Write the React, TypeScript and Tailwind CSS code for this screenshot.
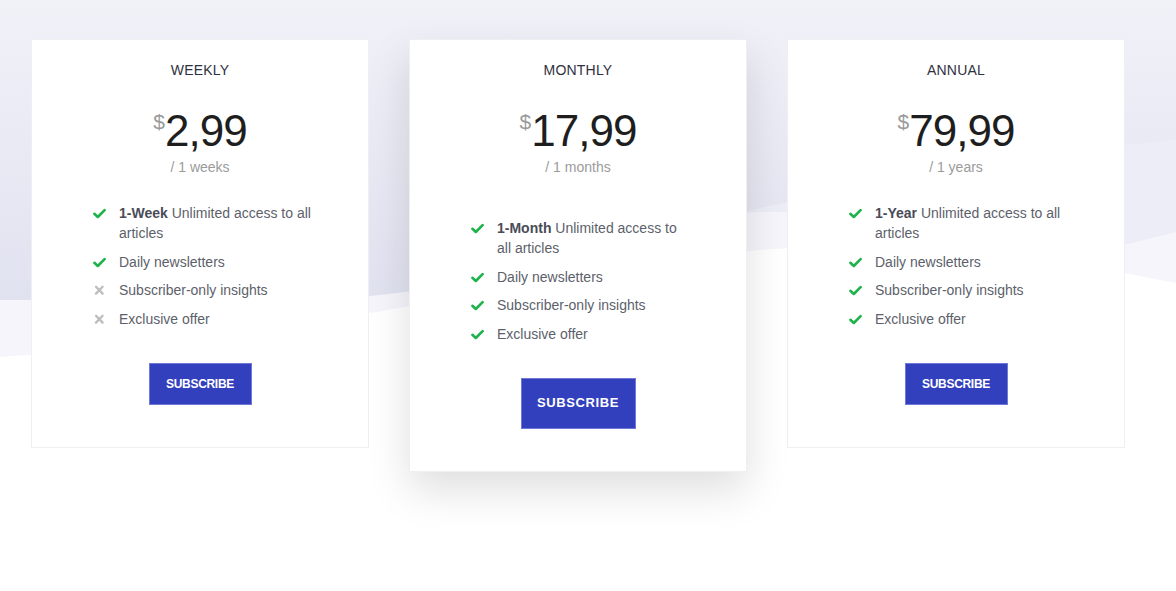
import React from "react";

type Feature = { bold?: string; text: string; ok: boolean };
type Plan = {
  title: string;
  price: string;
  period: string;
  features: Feature[];
  featured?: boolean;
};

const plans: Plan[] = [
  {
    title: "WEEKLY",
    price: "2,99",
    period: "/ 1 weeks",
    features: [
      { bold: "1-Week", text: " Unlimited access to all articles", ok: true },
      { text: "Daily newsletters", ok: true },
      { text: "Subscriber-only insights", ok: false },
      { text: "Exclusive offer", ok: false },
    ],
  },
  {
    title: "MONTHLY",
    price: "17,99",
    period: "/ 1 months",
    featured: true,
    features: [
      { bold: "1-Month", text: " Unlimited access to all articles", ok: true },
      { text: "Daily newsletters", ok: true },
      { text: "Subscriber-only insights", ok: true },
      { text: "Exclusive offer", ok: true },
    ],
  },
  {
    title: "ANNUAL",
    price: "79,99",
    period: "/ 1 years",
    features: [
      { bold: "1-Year", text: " Unlimited access to all articles", ok: true },
      { text: "Daily newsletters", ok: true },
      { text: "Subscriber-only insights", ok: true },
      { text: "Exclusive offer", ok: true },
    ],
  },
];

function Check() {
  return (
    <svg width="13" height="11" viewBox="0 0 13 11" className="block">
      <path d="M1.4 5.8 L4.8 9 L11.6 2.2" fill="none" stroke="#1db34a" strokeWidth="2.6" strokeLinecap="round" strokeLinejoin="round" />
    </svg>
  );
}

function Cross() {
  return (
    <svg width="13" height="11" viewBox="0 0 13 11" className="block">
      <path d="M3 1.8 L9.6 8.6 M9.6 1.8 L3 8.6" fill="none" stroke="#bdbdbd" strokeWidth="2.3" strokeLinecap="round" />
    </svg>
  );
}

function Card({ plan }: { plan: Plan }) {
  const f = plan.featured;
  return (
    <div
      className={
        "w-[338px] bg-white border border-[#efeff1] flex flex-col items-center pt-[20px] pb-[42px] " +
        (f ? "shadow-[0_18px_40px_rgba(0,0,0,0.13)] relative z-10" : "")
      }
    >
      <div className="text-[14px] leading-[20px] text-[#2f3140] tracking-[0.2px]">{plan.title}</div>
      <div className="mt-[29px] flex items-start">
        <span className="text-[21px] leading-[21px] text-[#9a9a9a] mt-[2px]">$</span>
        <span className="text-[44px] leading-[44px] text-[#1e1e1e] tracking-[-1px]">{plan.price}</span>
      </div>
      <div className="mt-[4px] text-[14px] leading-[20px] text-[#9b9b9b]">{plan.period}</div>
      <ul className={"w-[222px] ml-[6px] flex flex-col gap-[8.5px] " + (f ? "mt-[41px]" : "mt-[26px]")}>
        {plan.features.map((ft, i) => (
          <li key={i} className="flex items-start">
            <span className="w-[27px] shrink-0 pt-[5px] pl-[1px]">{ft.ok ? <Check /> : <Cross />}</span>
            <span className="text-[14px] leading-[20px] text-[#5d5f6b]">
              {ft.bold && <strong className="font-bold text-[#4a4c58]">{ft.bold}</strong>}
              {ft.text}
            </span>
          </li>
        ))}
      </ul>
      <button
        className={
          "mt-[34px] bg-[#3340bd] border border-[#6f78d6] text-white font-bold flex items-center justify-center " +
          (f ? "w-[115px] h-[51px] text-[13px] tracking-[0.6px]" : "w-[103px] h-[42px] text-[12px] tracking-[-0.3px]")
        }
      >
        SUBSCRIBE
      </button>
    </div>
  );
}

export default function App() {
  return (
    <div
      className="relative w-full h-[591px] bg-white overflow-hidden"
      style={{ fontFamily: '"Liberation Sans", Arial, sans-serif' }}
    >
      <svg className="absolute left-0 top-0 w-[1176px] h-[591px]" viewBox="0 0 1176 591" preserveAspectRatio="none">
        <defs>
          <linearGradient id="dk" x1="0" y1="0" x2="0" y2="1">
            <stop offset="0" stopColor="#f1f1f8" />
            <stop offset="1" stopColor="#e1e2f0" />
          </linearGradient>
        </defs>
        <path d="M0 0 H1176 V283 L1124 273 C1000 250 880 240 760 250 C600 265 420 305 370 313 C250 330 100 350 0 357 Z" fill="#f5f5fb" />
        <path d="M0 0 H1176 V232 L1124 245 C1000 230 880 210 760 212 C500 230 200 280 0 290 Z" fill="#ededf7" />
        <path d="M0 0 H1176 V140 L1124 145 C1000 160 880 185 760 208 C600 250 450 290 370 296 C250 300 100 300 0 300 Z" fill="url(#dk)" />
      </svg>
      <div className="relative flex items-start gap-[40px] pl-[31px] pt-[39px]">
        {plans.map((p) => (
          <Card key={p.title} plan={p} />
        ))}
      </div>
    </div>
  );
}
